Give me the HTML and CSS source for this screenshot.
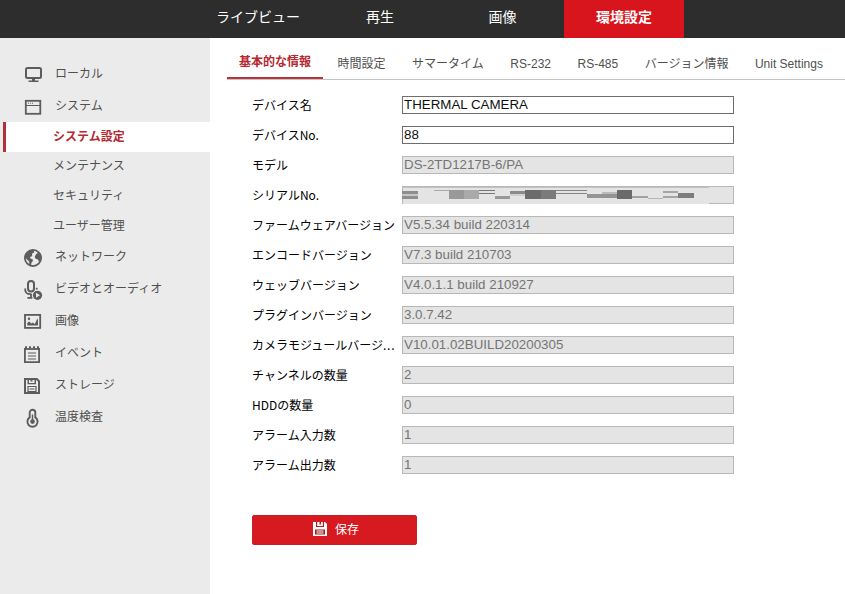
FILE: index.html
```
<!DOCTYPE html>
<html lang="ja">
<head>
  <meta charset="UTF-8">
  <meta name="viewport" content="width=device-width, initial-scale=1.0">
  <title>環境設定</title>
  <link rel="stylesheet" href="styles.css">
</head>
<body>
  <header class="topbar">
    <nav class="main-nav">
      <a>ライブビュー</a>
      <a>再生</a>
      <a>画像</a>
      <a class="active">環境設定</a>
    </nav>
  </header>

  <div class="page">
    <aside class="sidebar">
      <div class="menu-item top">
        <svg class="icon" viewBox="0 0 18 18"><rect x="2" y="2" width="15" height="10" rx="1.5" fill="none" stroke="currentColor" stroke-width="2"/><path d="M8 12h3v2.500h3.500V16h-10v-1.500H8z" fill="currentColor"/></svg>
        <span>ローカル</span>
      </div>
      <div class="menu-item top">
        <svg class="icon" viewBox="0 0 18 18"><rect x="1.8" y="2.8" width="14.5" height="13" fill="none" stroke="currentColor" stroke-width="1.8"/><path d="M2 7.5h14" stroke="currentColor"/><path d="M4 5.2h5" stroke="currentColor" stroke-dasharray="1 1"/></svg>
        <span>システム</span>
      </div>
      <div class="sub-item active">システム設定</div>
      <div class="sub-item">メンテナンス</div>
      <div class="sub-item">セキュリティ</div>
      <div class="sub-item">ユーザー管理</div>
      <div class="menu-item">
        <svg class="icon" viewBox="0 0 18 18"><circle cx="9" cy="9" r="8.1" fill="none" stroke="currentColor" stroke-width="1.8"/><path d="M2 5l3-3.4L9.5 1l.8 2.2L8 4.7 8.2 7 6 8.2 6.4 9.6 8.6 10.2 8.9 12 7.5 13.6 7 16.5 5.5 15.5 5 12.2 3 10.5 1 8zM12 5.2l2.4-1.7L16.6 7l.2 3.6-1.6 2.9-1.2-3-2.4-.7-.9-2z" fill="currentColor"/></svg>
        <span>ネットワーク</span>
      </div>
      <div class="menu-item">
        <svg class="icon" viewBox="0 0 18 18"><rect x="4" y="0" width="6" height="10.5" rx="3" fill="none" stroke="currentColor" stroke-width="2"/><path d="M1.2 7.5v1.3c0 2.5 2 4.4 4.800 4.4h1.500M7 13v3.500M3.400 16.800h5M12.700 6.800v1.700" fill="none" stroke="currentColor" stroke-width="1.8"/><circle cx="13.500" cy="14.300" r="4.600" fill="currentColor"/><path d="M12 11.800l4 2.500-4 2.500z" fill="#ebebeb"/></svg>
        <span>ビデオとオーディオ</span>
      </div>
      <div class="menu-item">
        <svg class="icon" viewBox="0 0 18 18"><rect x="1" y="1.9" width="15.2" height="13" fill="none" stroke="currentColor" stroke-width="1.8"/><circle cx="5" cy="5.8" r="1.2" fill="currentColor"/><path d="M3.300 12.600v-2.500l1.800-1.500 2.200 2 1.600-1.200 1.900 1.700 2.600-5.500.6 1.500v5.500z" fill="currentColor"/></svg>
        <span>画像</span>
      </div>
      <div class="menu-item">
        <svg class="icon" viewBox="0 0 18 18"><path d="M.9 3v14.1h14.2V3" fill="none" stroke="currentColor" stroke-width="1.8"/><path d="M0 4h16" stroke="currentColor" stroke-width="1.8"/><path d="M1 2.3h14" stroke="currentColor" stroke-width="2.2" stroke-dasharray="2 2"/><path d="M4 8h8M4 11h8M4 14h8" stroke="currentColor" stroke-width="1.2"/></svg>
        <span>イベント</span>
      </div>
      <div class="menu-item">
        <svg class="icon" viewBox="0 0 18 18"><path d="M1 2h11.8L15 4.2V16H1z" fill="none" stroke="currentColor" stroke-width="2"/><path d="M3.500 2h1.500v5H3.500zM6.500 2h2v2.500h-2zM10.500 2H12v5h-1.500zM3.500 6H12v1.200H3.500z" fill="currentColor"/><path d="M4 9.500h8v5H4zM5.500 12h5" fill="none" stroke="currentColor" stroke-width="1.2"/></svg>
        <span>ストレージ</span>
      </div>
      <div class="menu-item">
        <svg class="icon" viewBox="0 0 18 18"><path d="M5.700 8.400V3.600a2.800 2.800 0 0 1 5.600 0v4.800a5.100 5.100 0 1 1-5.600 0z" fill="none" stroke="currentColor" stroke-width="1.9"/><path d="M8.500 5.500v7" stroke="currentColor" stroke-width="1.5"/><circle cx="8.500" cy="12.600" r="2.300" fill="currentColor"/></svg>
        <span>温度検査</span>
      </div>
    </aside>

    <main class="content">
      <nav class="tabs">
        <a class="active">基本的な情報</a>
        <a>時間設定</a>
        <a>サマータイム</a>
        <a>RS-232</a>
        <a>RS-485</a>
        <a>バージョン情報</a>
        <a>Unit Settings</a>
      </nav>

      <form class="info-form">
        <div class="row"><label>デバイス名</label><input type="text" value="THERMAL CAMERA"></div>
        <div class="row"><label>デバイスNo.</label><input type="text" value="88"></div>
        <div class="row"><label>モデル</label><input type="text" value="DS-2TD1217B-6/PA" disabled></div>
        <div class="row">
          <label>シリアルNo.</label>
          <svg class="serial" viewBox="0 0 332 18" shape-rendering="crispEdges">
            <rect width="332" height="18" fill="#e4e4e4"/>
            <path d="M0 0h332v1H0zM331 0h1v18h-1zM307 17h25v1h-25zM0 0h1v18H0z" fill="#b8b8b8"/>
            <path d="M0 1h307v1H0z" fill="#c2c2c2"/>
            <path d="M0 5h16v3H0zM0 10h16v3H0z" fill="#8e8e8e"/>
            <path d="M0 8h16v2H0z" fill="#c6c6c6"/>
            <path d="M32 4h15v1H32z" fill="#aaa"/>
            <path d="M47 4h15v9H47z" fill="#999"/>
            <path d="M62 4h15v9H62z" fill="#a9a9a9"/>
            <path d="M77 4h16v1H77zM77 7h16v1H77z" fill="#777"/>
            <path d="M93 10h15v3H93z" fill="#999"/>
            <path d="M108 5h15v3h-15z" fill="#8b8b8b"/>
            <path d="M108 8h15v2h-15z" fill="#d0d0d0"/>
            <path d="M123 4h16v9h-16z" fill="#6c6c6c"/>
            <path d="M139 4h15v9h-15z" fill="#7b7b7b"/>
            <path d="M154 4h31v1h-31zM154 7h31v1h-31z" fill="#858585"/>
            <path d="M185 8h30v4h-30z" fill="#949494"/>
            <path d="M200 6h15v2h-15z" fill="#bbb"/>
            <path d="M215 4h15v9h-15z" fill="#6b6b6b"/>
            <path d="M230 10h16v2h-16z" fill="#a2a2a2"/>
            <path d="M246 12h15v1h-15z" fill="#b5b5b5"/>
            <path d="M261 5h15v2h-15zM261 10h15v2h-15z" fill="#a5a5a5"/>
            <path d="M276 7h16v5h-16z" fill="#7d7d7d"/>
          </svg>
        </div>
        <div class="row"><label>ファームウェアバージョン</label><input type="text" value="V5.5.34 build 220314" disabled></div>
        <div class="row"><label>エンコードバージョン</label><input type="text" value="V7.3 build 210703" disabled></div>
        <div class="row"><label>ウェッブバージョン</label><input type="text" value="V4.0.1.1 build 210927" disabled></div>
        <div class="row"><label>プラグインバージョン</label><input type="text" value="3.0.7.42" disabled></div>
        <div class="row"><label>カメラモジュールバージ<span class="dots">...</span></label><input type="text" value="V10.01.02BUILD20200305" disabled></div>
        <div class="row"><label>チャンネルの数量</label><input type="text" value="2" disabled></div>
        <div class="row"><label>HDDの数量</label><input type="text" value="0" disabled></div>
        <div class="row"><label>アラーム入力数</label><input type="text" value="1" disabled></div>
        <div class="row"><label>アラーム出力数</label><input type="text" value="1" disabled></div>

        <button type="button" class="btn-save">
          <svg viewBox="0 0 14 14"><path d="M0 0h12l2 2v12H0z" fill="#fff"/><path d="M3 0h1.2v4h5.6V0H11v5H3zM6.5 0H8v2.5H6.5zM2 7.5h10v5H2z" fill="#a51d22"/><path d="M3.500 9h7M3.500 11h7" stroke="#fff"/></svg>
          <span>保存</span>
        </button>
      </form>
    </main>
  </div>
</body>
</html>
```
FILE: styles.css
```
* {
  box-sizing: border-box;
}
body {
  margin: 0;
  height: 594px;
  overflow: hidden;
  display: flex;
  flex-direction: column;
  font-family: "Liberation Sans", "Noto Sans CJK JP", sans-serif;
  font-size: 12px;
  color: #000;
  background: #fff;
}
.topbar {
  height: 38px;
  padding-left: 197px;
  background: #2d2d2d;
}
.main-nav {
  display: flex;
}
.main-nav a {
  width: 122px;
  height: 38px;
  line-height: 35px;
  text-align: center;
  font-size: 14px;
  color: #fff;
}
.main-nav a:nth-child(3) {
  width: 123px;
}
.main-nav a.active {
  width: 120px;
  background: #d8141c;
  font-weight: bold;
}
.page {
  display: flex;
  flex: 1;
}
.sidebar {
  width: 210px;
  padding-top: 20px;
  background: #ebebeb;
  color: #505050;
}
.menu-item {
  display: flex;
  align-items: center;
  height: 32px;
  padding-left: 24px;
}
.menu-item.top {
  padding-top: 2px;
}
.menu-item span {
  margin-left: 13px;
  line-height: 18px;
  padding-bottom: 2px;
}
.icon {
  width: 18px;
  height: 18px;
  overflow: visible;
  color: #5c5c5c;
}
.sub-item {
  height: 30px;
  line-height: 28px;
  padding-left: 53px;
}
.sub-item.active {
  margin-left: 3px;
  padding-left: 47px;
  line-height: 30px;
  border-left: 3px solid #b03238;
  background: #fff;
  color: #b5282f;
  font-weight: bold;
}
.content {
  flex: 1;
  padding-left: 17px;
}
.tabs {
  display: flex;
  gap: 2.5px;
  height: 42px;
  border-bottom: 1px solid #c4c4c4;
}
.tabs a {
  height: 41px;
  padding: 0 12px;
  line-height: 53px;
  white-space: nowrap;
  color: #505050;
}
.tabs a.active {
  line-height: 49px;
  border-bottom: 2px solid #b8333a;
  color: #b5282f;
  font-weight: bold;
}
.info-form {
  padding: 10px 0 0 25px;
}
.row {
  display: flex;
  align-items: center;
  height: 30px;
}
.row label {
  width: 150px;
  line-height: 20px;
  white-space: nowrap;
  font-family: "Noto Sans CJK JP", sans-serif;
}
.dots {
  letter-spacing: 0.8px;
}
.row input {
  width: 332px;
  height: 18px;
  padding: 0 1px 2px;
  border: 1px solid #6e6e6e;
  background: #fff;
  font-family: "Liberation Sans", sans-serif;
  font-size: 13.33px;
  color: #111;
}
.row input:disabled {
  border-color: #b8b8b8;
  background: #e4e4e4;
  color: #747474;
}
.serial {
  width: 332px;
  height: 18px;
}
.btn-save {
  display: flex;
  align-items: center;
  justify-content: center;
  gap: 8px;
  width: 165px;
  height: 30px;
  margin-top: 35px;
  padding: 0 0 2px 3px;
  border: 1px solid #c3222a;
  border-radius: 2px;
  background: #d71920;
  color: #fff;
  font-family: "Noto Sans CJK JP", sans-serif;
  font-size: 12px;
}
.btn-save svg {
  width: 14px;
  height: 14px;
}
.btn-save span {
  padding-bottom: 2px;
}
```
